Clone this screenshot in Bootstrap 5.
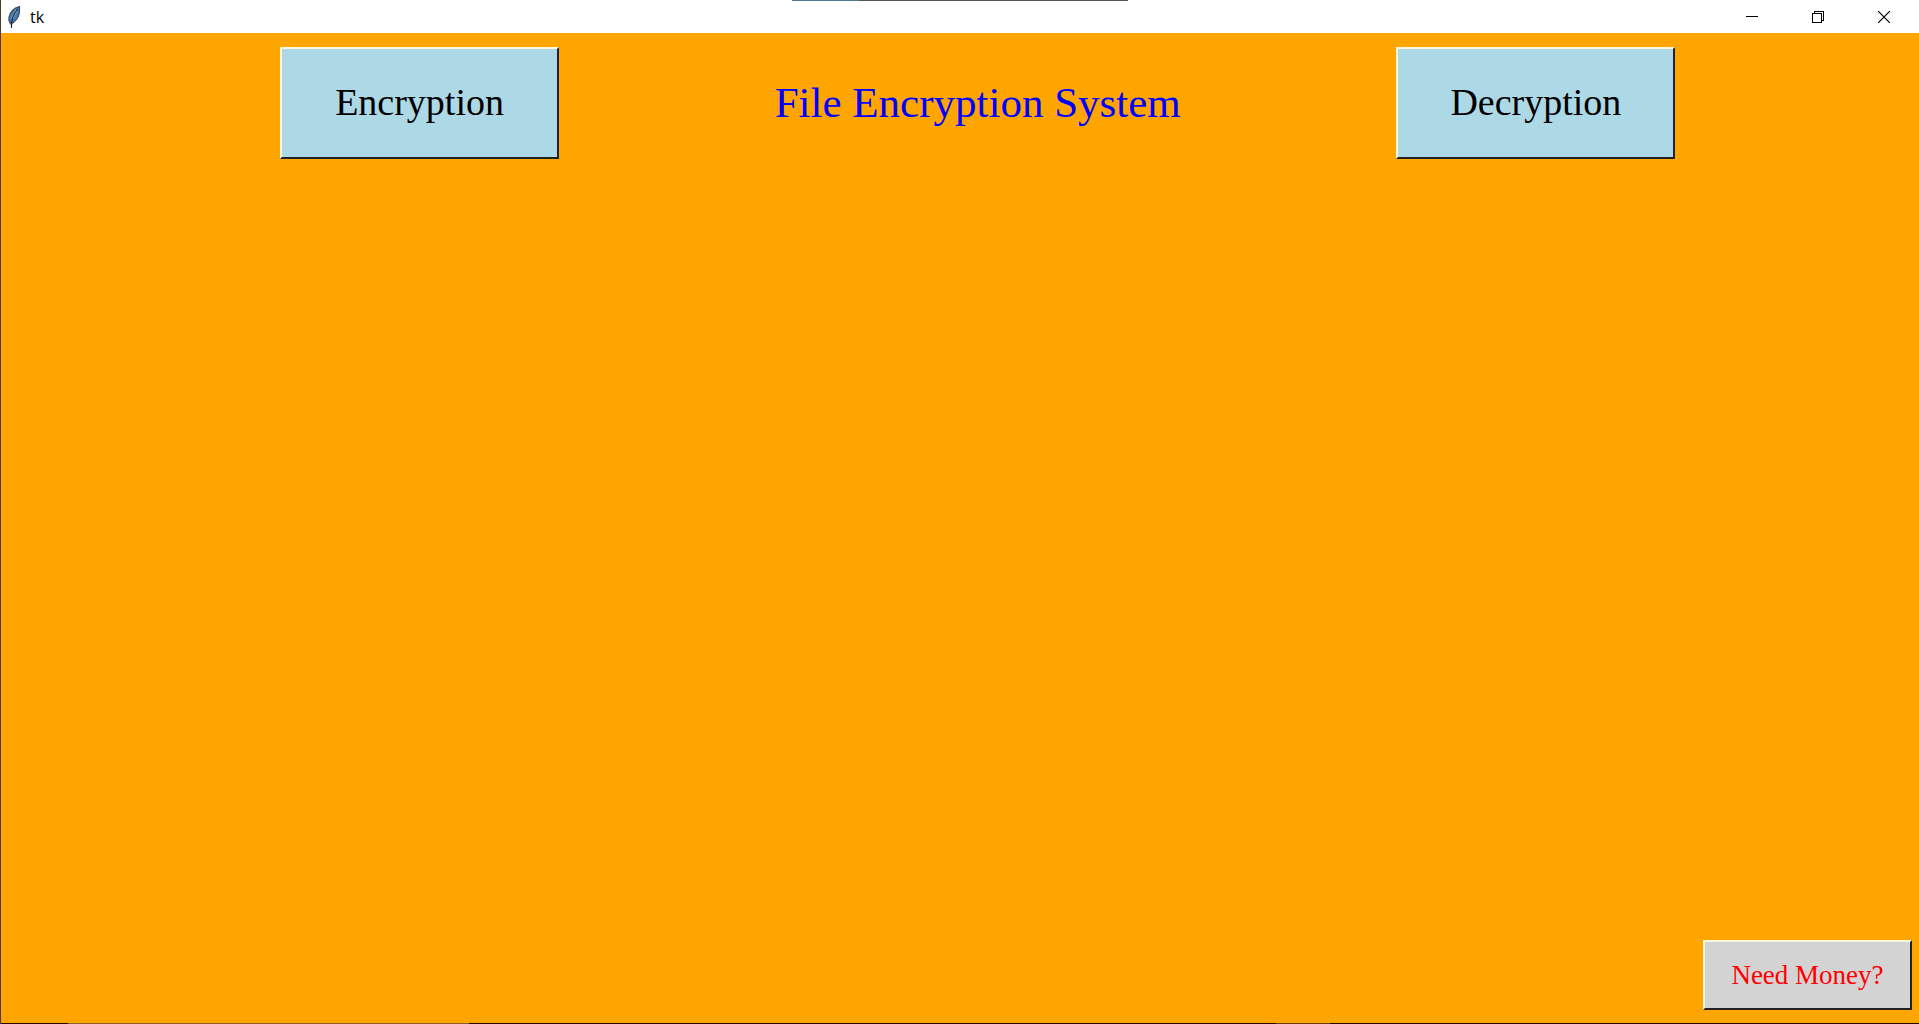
<!DOCTYPE html>
<html lang="en">
<head>
<meta charset="utf-8">
<meta name="viewport" content="width=device-width, initial-scale=1">
<title>tk</title>
<link href="https://cdn.jsdelivr.net/npm/bootstrap@5.3.0/dist/css/bootstrap.min.css" rel="stylesheet">
<style>
  body { background: orange; font-family: "Liberation Serif", "Times New Roman", serif; }
  .window-frame { border-left: 1px solid #4d3a20; }
  .titlebar { height: 33px; padding-right: 2px; font-family: "Open Sans", "Noto Sans", sans-serif; color: #000; }
  .titlebar-name { font-size: 16px; line-height: 20px; }
  .caption-btn { width: 66px; height: 32px; color: #000; }
  /* slice of the window behind, along the top edge */
  .edge-top { height: 1px; left: 41.25%; width: 17.5%; background: linear-gradient(90deg, #4c7a94 20%, #555 20%); }
  .edge-bottom { height: 1px; background: linear-gradient(90deg, #2a0500 3.5%, #8a6020 3.5% 24.4%, #2a0500 24.4% 66.5%, #6b3a00 66.5% 69.3%, #2a0500 69.3%); }
  .toolbar-row { padding: 14px 12.7% 0 14.55%; }
  .tk-btn { border: 2px solid; border-color: #fbf6dc #222 #222 #fbf6dc; color: #000; }
  .tk-btn-lg { width: 279px; height: 112px; padding: 0 0 2px; background: lightblue; font-size: 38px; line-height: 44px; }
  .tk-btn-sm { width: 209px; height: 70px; padding: 0; background: lightgray; color: red; font-size: 27px; line-height: 32px; }
  .app-title { color: blue; font-size: 43px; line-height: 50px; font-weight: 400; }
  .footer-row { padding: 0 7px 13px; }
</style>
<script src="https://cdn.jsdelivr.net/npm/bootstrap@5.3.0/dist/js/bootstrap.bundle.min.js" defer></script>
</head>
<body>
<div class="window-frame d-flex flex-column min-vh-100 position-relative">
  <div class="edge-top position-absolute top-0"></div>
  <header class="titlebar bg-white d-flex align-items-center justify-content-between">
    <div class="d-flex align-items-center gap-2 ps-1">
      <svg width="17" height="24" viewBox="0 0 17 24" aria-hidden="true">
        <path d="M14.500 1.500C9.500 2.500 5 7 4 12C3.500 15 4 17 5.500 19C10.500 17 14 12 14.500 7Z" fill="#4679b0" stroke="#3a4a60" stroke-width="1.2"/>
        <path d="M11.500 5L7 14" stroke="#9cc3e4" stroke-width="2" fill="none"/>
        <path d="M12.500 4C8.500 9 6 15 6.500 23" stroke="#1b2533" stroke-width="1.2" fill="none"/>
      </svg>
      <span class="titlebar-name">tk</span>
    </div>
    <div class="d-flex">
      <button type="button" class="caption-btn btn p-0 border-0 rounded-0 d-flex align-items-center justify-content-center" aria-label="Minimize">
        <svg width="12" height="12" viewBox="0 0 12 12" shape-rendering="crispEdges"><path d="M0 5.500H12" stroke="#000" fill="none"/></svg>
      </button>
      <button type="button" class="caption-btn btn p-0 border-0 rounded-0 d-flex align-items-center justify-content-center" aria-label="Restore">
        <svg width="12" height="12" viewBox="0 0 12 12" shape-rendering="crispEdges"><path d="M.5 2.500H9.500V11.500H.5ZM2.500 2.500V.5H11.500V9.500H9.500" stroke="#000" fill="none"/></svg>
      </button>
      <button type="button" class="caption-btn btn p-0 border-0 rounded-0 d-flex align-items-center justify-content-center" aria-label="Close">
        <svg width="12" height="12" viewBox="0 0 12 12"><path d="M0 0L12 12M12 0L0 12" stroke="#000" stroke-width="1.2" fill="none"/></svg>
      </button>
    </div>
  </header>
  <main class="flex-grow-1 d-flex flex-column justify-content-between">
    <div class="toolbar-row d-flex align-items-center justify-content-between">
      <button type="button" class="btn tk-btn tk-btn-lg rounded-0">Encryption</button>
      <h1 class="app-title m-0">File Encryption System</h1>
      <button type="button" class="btn tk-btn tk-btn-lg rounded-0">Decryption</button>
    </div>
    <div class="footer-row d-flex justify-content-end">
      <button type="button" class="btn tk-btn tk-btn-sm rounded-0">Need Money?</button>
    </div>
  </main>
  <div class="edge-bottom"></div>
</div>
</body>
</html>
